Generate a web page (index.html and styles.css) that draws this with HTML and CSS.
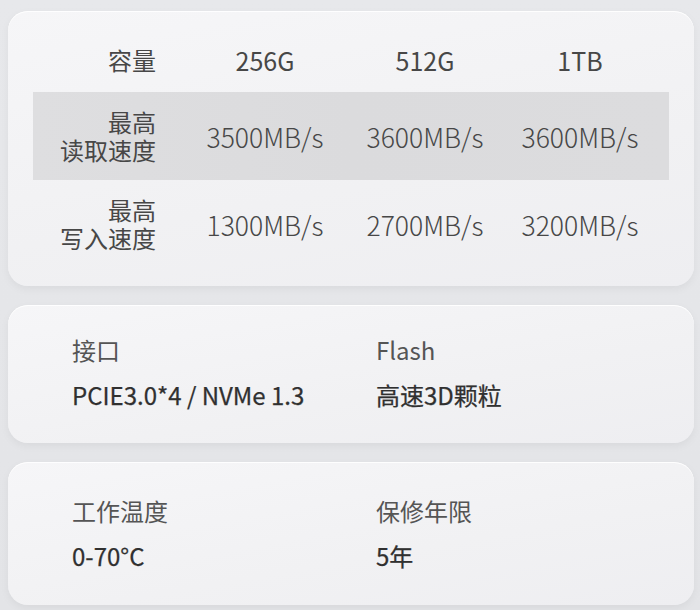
FILE: index.html
```html
<!DOCTYPE html>
<html lang="zh">
<head>
<meta charset="utf-8">
<link rel="stylesheet" href="styles.css">
</head>
<body>
<div class="page">
  <section class="card table-card">
    <div class="spec-table">
      <div class="row head">
        <div class="label">容量</div>
        <div class="cell">256G</div>
        <div class="cell">512G</div>
        <div class="cell">1TB</div>
      </div>
      <div class="row hl">
        <div class="label"><span class="ln">最高</span><span class="ln">读取速度</span></div>
        <div class="cell val">3500MB/s</div>
        <div class="cell val">3600MB/s</div>
        <div class="cell val">3600MB/s</div>
      </div>
      <div class="row">
        <div class="label"><span class="ln">最高</span><span class="ln">写入速度</span></div>
        <div class="cell val">1300MB/s</div>
        <div class="cell val">2700MB/s</div>
        <div class="cell val">3200MB/s</div>
      </div>
    </div>
  </section>
  <section class="card info-card c2">
    <div class="info">
      <div class="k">接口</div>
      <div class="v">PCIE3.0*4 / NVMe 1.3</div>
    </div>
    <div class="info">
      <div class="k">Flash</div>
      <div class="v">高速3D颗粒</div>
    </div>
  </section>
  <section class="card info-card c3">
    <div class="info">
      <div class="k">工作温度</div>
      <div class="v">0-70°C</div>
    </div>
    <div class="info">
      <div class="k">保修年限</div>
      <div class="v">5年</div>
    </div>
  </section>
</div>
</body>
</html>
```

FILE: styles.css
```css
html, body {
  margin: 0;
  padding: 0;
}
body {
  width: 700px;
  height: 610px;
  background: linear-gradient(180deg, #e7e8eb 0%, #e3e4e7 100%);
  font-family: "Noto Sans CJK SC", "Noto Sans", sans-serif;
  color: #444;
  overflow: hidden;
}
.page {
  display: flex;
  flex-direction: column;
  gap: 19px;
  padding: 11px 0 0 8px;
}
.card {
  width: 686px;
  box-sizing: border-box;
  border-radius: 20px;
  background: linear-gradient(170deg, #f6f6f8 0%, #f1f1f3 60%, #eeeef1 100%);
  box-shadow: 0 3px 8px rgba(0, 0, 0, 0.05), inset 0 1px 0 rgba(255, 255, 255, 0.9);
}
.table-card {
  height: 275px;
  padding: 17px 0 0 25px;
}
.spec-table {
  width: 636px;
}
.row {
  display: grid;
  grid-template-columns: 152px 160px 160px 150px;
  align-items: center;
  height: 88px;
}
.row.head {
  height: 64px;
}
.row.hl {
  background: linear-gradient(90deg, #dedee0 0%, #dbdbdd 50%, #dcdcde 100%);
}
.label {
  display: flex;
  flex-direction: column;
  align-items: flex-end;
  padding-right: 29px;
  font-size: 24px;
  line-height: 28px;
  color: #474747;
}
.ln {
  display: block;
}
.cell {
  text-align: center;
  font-size: 25px;
  color: #474747;
}
.cell.val {
  font-size: 26.5px;
  font-weight: 300;
  color: #474747;
}
.info-card {
  display: grid;
  grid-template-columns: 304px 1fr;
  padding-left: 64px;
}
.c2 {
  height: 138px;
  padding-top: 30px;
}
.c3 {
  height: 143px;
  padding-top: 34px;
}
.k {
  font-size: 24px;
  line-height: 30px;
  color: #555;
}
.v {
  margin-top: 15px;
  font-size: 24px;
  line-height: 30px;
  color: #303030;
  -webkit-text-stroke: 0.25px #303030;
}
```
